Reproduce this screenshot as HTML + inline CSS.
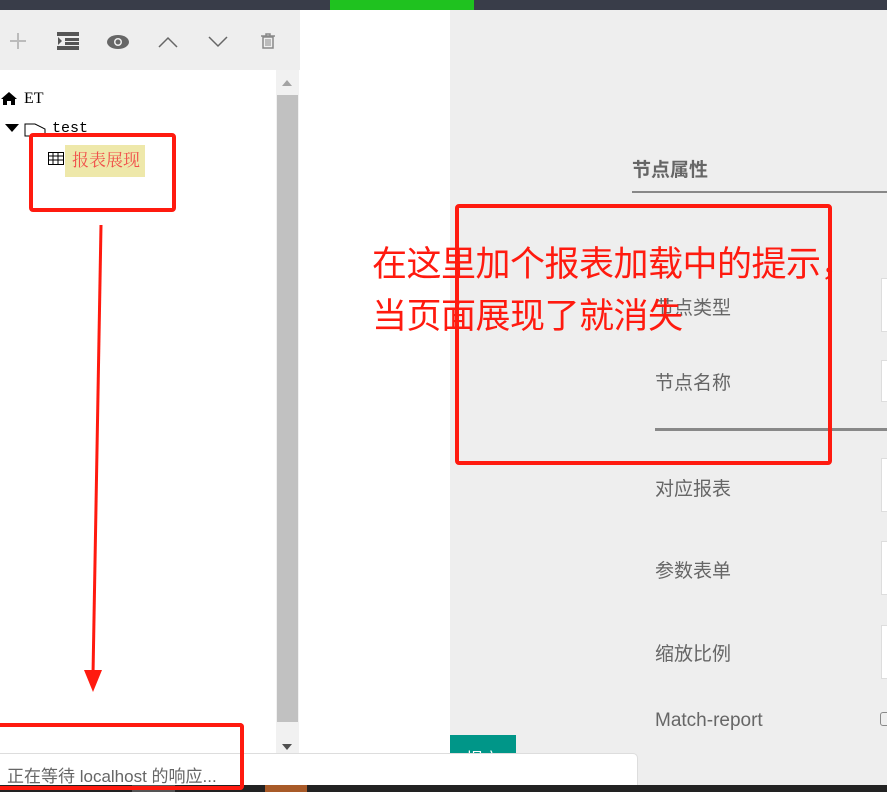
<!DOCTYPE html>
<html><head><meta charset="utf-8"><style>
*{margin:0;padding:0;box-sizing:border-box}
body{width:887px;height:792px;overflow:hidden;position:relative;background:#fff;font-family:"Liberation Sans","Noto Sans CJK SC",sans-serif}
.a{position:absolute}
.lbl{position:absolute;left:655px;font-size:19px;color:#666}
.inp{position:absolute;left:881px;width:10px;height:54px;background:#fff;border:1px solid #ddd}
.rb{position:absolute;border:4px solid #ff1a0f;border-radius:4px}
</style></head><body>
<div class="a" style="left:0;top:0;width:887px;height:10px;background:#393d49"></div>
<div class="a" style="left:330px;top:0;width:144px;height:10px;background:#1fc21f"></div>
<div class="a" style="left:0;top:10px;width:300px;height:60px;background:#eee"></div>
<svg class="a" style="left:0;top:25px" width="300" height="32" viewBox="0 0 300 32">
<path d="M18 8v16M10 16h16" stroke="#bbb" stroke-width="2"/>
<rect x="57" y="7" width="22" height="4" fill="#555"/><rect x="65" y="13" width="14" height="3" fill="#555"/><rect x="65" y="17" width="14" height="3" fill="#555"/><rect x="57" y="21" width="22" height="4" fill="#555"/><path d="M58 12l4 4-4 4z" fill="#555"/>
<ellipse cx="118" cy="17" rx="11" ry="7" fill="#666"/><circle cx="118" cy="17" r="4" fill="#eee"/><circle cx="118" cy="17" r="2.5" fill="#666"/>
<path d="M159 22l9-9 9 9" stroke="#666" stroke-width="1.5" fill="none"/>
<path d="M209 12l9 9 9-9" stroke="#666" stroke-width="1.5" fill="none"/>
<path d="M261 11h14M266 11v-2h4v2M263 12h10v11h-10z" stroke="#888" stroke-width="1.5" fill="none"/><path d="M266 14v7M268 14v7M270 14v7" stroke="#888"/>
</svg>
<svg class="a" style="left:1px;top:92px" width="16" height="14"><path d="M0 7L8 0l8 7h-2v6h-4v-4h-4v4H2V7z" fill="#000"/></svg>
<div class="a" style="left:24px;top:90px;font-size:16px;font-family:'Liberation Serif',serif">ET</div>
<svg class="a" style="left:4px;top:121px" width="42" height="16"><path d="M1 3h14l-7 8z" fill="#000"/><path d="M21 3h10l10 5v7h-20z" fill="none" stroke="#000"/></svg>
<div class="a" style="left:52px;top:120px;font-size:15px;font-family:'Liberation Mono',monospace">test</div>
<svg class="a" style="left:48px;top:152px" width="16" height="13"><rect x="0.5" y="0.5" width="15" height="12" fill="none" stroke="#000"/><path d="M0 4h16M0 8h16M5 0v13M10 0v13" stroke="#000"/></svg>
<div class="a" style="left:65px;top:145px;width:80px;height:32px;background:#eee8aa;color:#f0504a;font-size:17px;line-height:32px;padding-left:7px;font-family:'Liberation Serif','Noto Serif CJK SC',serif">报表展现</div>
<div class="a" style="left:276px;top:70px;width:23px;height:683px;background:#f1f1f1"></div>
<div class="a" style="left:277px;top:95px;width:21px;height:627px;background:#c1c1c1"></div>
<svg class="a" style="left:280px;top:78px" width="14" height="10"><path d="M2 8l5-6 5 6z" fill="#a3a3a3"/></svg>
<svg class="a" style="left:280px;top:742px" width="14" height="10"><path d="M2 2l5 6 5-6z" fill="#505050"/></svg>
<div class="a" style="left:450px;top:10px;width:437px;height:775px;background:#eee"></div>
<div class="a" style="left:632px;top:155px;font-size:19px;font-weight:bold;color:#666">节点属性</div>
<div class="a" style="left:632px;top:191px;width:255px;height:2px;background:#888"></div>
<div class="lbl" style="top:293px">节点类型</div>
<div class="lbl" style="top:368px">节点名称</div>
<div class="a" style="left:655px;top:428px;width:232px;height:3px;background:#888"></div>
<div class="lbl" style="top:474px">对应报表</div>
<div class="lbl" style="top:556px">参数表单</div>
<div class="lbl" style="top:639px">缩放比例</div>
<div class="lbl" style="top:710px">Match-report</div>
<div class="inp" style="top:278px"></div><div class="inp" style="top:360px;height:42px"></div>
<div class="inp" style="top:458px"></div><div class="inp" style="top:541px"></div><div class="inp" style="top:625px"></div>
<div class="a" style="left:880px;top:712px;width:10px;height:14px;border:1px solid #888;border-radius:3px;background:#eee"></div>
<div class="a" style="left:450px;top:735px;width:66px;height:30px;background:#009688;color:#fff;font-size:17px;padding:10px 0 0 16px">提交</div>
<div class="a" style="left:0;top:753px;width:638px;height:32px;background:#fff;border-top:1px solid #ddd;border-right:1px solid #ddd;border-radius:0 5px 0 0;font-size:17px;color:#666;padding:8px 0 0 7px">正在等待 localhost 的响应...</div>
<div class="a" style="left:0;top:785px;width:887px;height:7px;background:#222"></div>
<div class="a" style="left:132px;top:785px;width:43px;height:7px;background:#555"></div>
<div class="a" style="left:265px;top:785px;width:42px;height:7px;background:#a85a28"></div>
<div class="rb" style="left:29px;top:133px;width:147px;height:79px"></div>
<div class="rb" style="left:455px;top:204px;width:377px;height:261px"></div>
<div class="rb" style="left:0;top:723px;width:244px;height:67px;border-left:none;border-radius:0 4px 4px 0"></div>
<div class="a" style="left:372px;top:236px;font-size:35px;color:#ff1a0f;line-height:52px;font-family:'Noto Sans CJK SC',sans-serif;letter-spacing:-0.5px">在这里加个报表加载中的提示，<br>当页面展现了就消失</div>
<svg class="a" style="left:80px;top:225px" width="30" height="470"><path d="M21 0L13 450" stroke="#ff1a0f" stroke-width="3"/><path d="M4 445l9 22 9-22z" fill="#ff1a0f"/></svg>
</body></html>
